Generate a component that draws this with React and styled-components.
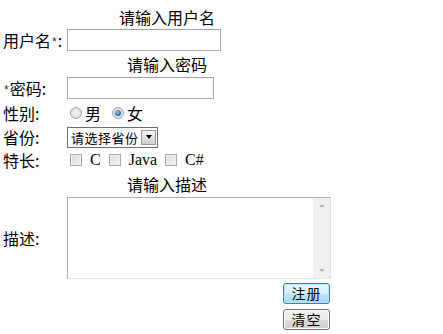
import React from "react";
import styled, { createGlobalStyle } from "styled-components";

const Global = createGlobalStyle`
  html, body { margin: 0; padding: 0; background: #fff; }
  body { font-family: "Noto Sans CJK SC", "Liberation Sans", sans-serif; color: #000; }
`;

const Form = styled.div`
  padding: 6px 0 0 3px;
  display: grid;
  grid-template-columns: 64px auto;
  align-items: center;
  font-size: 16px;
`;

const Label = styled.div`
  height: ${(p) => p.h}px;
  display: flex;
  align-items: center;
  line-height: 1;
  white-space: nowrap;
`;

const Star = styled.span`
  font-family: "Liberation Sans", sans-serif;
  font-size: 12px;
  color: #333;
  margin: 0 1px;
  transform: translateY(2px);
`;

const Cell = styled.div`
  height: ${(p) => p.h}px;
  display: flex;
  align-items: center;
`;

const Hint = styled.div`
  grid-column: 2;
  width: 200px;
  height: ${(p) => p.h}px;
  display: flex;
  align-items: center;
  justify-content: center;
  line-height: 1;
  font-size: 16px;
`;

const TextInput = styled.input`
  box-sizing: border-box;
  width: ${(p) => p.w}px;
  height: 22px;
  margin: 0;
  padding: 1px 2px;
  border: 1px solid #abadb3;
  border-top-color: #9ea3ab;
  font: inherit;
  outline: none;
`;

const Radio = styled.span`
  box-sizing: border-box;
  width: 12px;
  height: 12px;
  border-radius: 50%;
  border: 1px solid #a6a6a6;
  background: radial-gradient(circle at 50% 50%, #f2f2f2 0%, #d6d6d6 100%);
  display: inline-flex;
  align-items: center;
  justify-content: center;
  margin: 0 3px 0 3px;
  &::after {
    content: "";
    width: 6px;
    height: 6px;
    border-radius: 50%;
    background: radial-gradient(circle at 40% 35%, #8fd0f5 0%, #2a6fa6 60%, #174f7c 100%);
    display: ${(p) => (p.checked ? "block" : "none")};
  }
`;

const Choice = styled.span`
  display: inline-flex;
  align-items: center;
  margin-right: ${(p) => p.mr || 0}px;
  line-height: 1;
`;

const Select = styled.div`
  box-sizing: border-box;
  width: 91px;
  height: 21px;
  border: 1px solid #6f6f6f;
  display: flex;
  align-items: center;
  font-size: 13px;
  padding-left: 3px;
  line-height: 1;
  letter-spacing: 0.5px;
`;

const SelectText = styled.span`
  flex: 1;
`;

const Arrow = styled.span`
  box-sizing: border-box;
  width: 15px;
  height: 15px;
  margin-right: 1px;
  border: 1px solid #9a9a9a;
  background: linear-gradient(#f4f4f4, #cfcfcf);
  display: flex;
  align-items: center;
  justify-content: center;
  &::after {
    content: "";
    border-left: 3.5px solid transparent;
    border-right: 3.5px solid transparent;
    border-top: 4px solid #000;
  }
`;

const Check = styled.span`
  box-sizing: border-box;
  width: 12px;
  height: 12px;
  border: 1px solid #a9a9a9;
  background: linear-gradient(135deg, #d8d8d8, #f4f4f4);
  box-shadow: inset 0 0 0 1px #eee;
  margin: 0 8px 0 3px;
`;

const Latin = styled.span`
  font-family: "Liberation Serif", serif;
  font-size: 16px;
  margin-right: 5px;
`;

const TextArea = styled.div`
  box-sizing: border-box;
  width: 264px;
  height: 82px;
  border: 1px solid #abadb3;
  border-right-color: #dbdfe6;
  border-bottom-color: #e3e9ef;
  display: flex;
  justify-content: flex-end;
`;

const Scroll = styled.div`
  width: 17px;
  background: #f0f0f0;
  display: flex;
  flex-direction: column;
  justify-content: space-between;
  align-items: center;
  padding: 6px 0;
  box-sizing: border-box;
`;

const Tri = styled.span`
  border-left: 3px solid transparent;
  border-right: 3px solid transparent;
  ${(p) => (p.up ? "border-bottom: 3px solid #b8b8b8;" : "border-top: 3px solid #b8b8b8;")}
`;

const ButtonRow = styled.div`
  grid-column: 2;
  height: ${(p) => p.h}px;
  width: 263px;
  display: flex;
  justify-content: flex-end;
  align-items: center;
`;

const Button = styled.button`
  box-sizing: border-box;
  width: 47px;
  height: 21px;
  margin: 0;
  padding: 0;
  border-radius: 3px;
  border: 1px solid ${(p) => (p.focus ? "#3c7fb1" : "#707070")};
  background: ${(p) =>
    p.focus
      ? "linear-gradient(#eaf6fd 0%, #d9f0fc 50%, #bee6fd 51%, #a7d9f5 100%)"
      : "linear-gradient(#f2f2f2 0%, #ebebeb 50%, #dddddd 51%, #cfcfcf 100%)"};
  box-shadow: inset 0 0 0 1px ${(p) => (p.focus ? "#b9e3fa" : "#fcfcfc")};
  font-family: "Noto Sans CJK SC", sans-serif;
  font-size: 14px;
  line-height: 1;
  letter-spacing: 1px;
  color: #000;
`;

export default function App() {
  return (
    <>
      <Global />
      <Form>
        <Hint h={22}>请输入用户名</Hint>
        <Label h={24}>
          用户名<Star>*</Star>:
        </Label>
        <Cell h={24}>
          <TextInput w={154} />
        </Cell>
        <Hint h={24}>请输入密码</Hint>
        <Label h={24}>
          <Star>*</Star>密码:
        </Label>
        <Cell h={24}>
          <TextInput w={147} />
        </Cell>
        <Label h={26}>性别:</Label>
        <Cell h={26}>
          <Choice mr={8}>
            <Radio />男
          </Choice>
          <Choice>
            <Radio checked />女
          </Choice>
        </Cell>
        <Label h={22}>省份:</Label>
        <Cell h={22}>
          <Select>
            <SelectText>请选择省份</SelectText>
            <Arrow />
          </Select>
        </Cell>
        <Label h={23}>特长:</Label>
        <Cell h={23}>
          <Check />
          <Latin>C</Latin>
          <Check />
          <Latin>Java</Latin>
          <Check />
          <Latin>C#</Latin>
        </Cell>
        <Hint h={25}>请输入描述</Hint>
        <Label h={84}>描述:</Label>
        <Cell h={84}>
          <TextArea>
            <Scroll>
              <Tri up />
              <Tri />
            </Scroll>
          </TextArea>
        </Cell>
        <ButtonRow h={26}>
          <Button focus>注册</Button>
        </ButtonRow>
        <ButtonRow h={26}>
          <Button>清空</Button>
        </ButtonRow>
      </Form>
    </>
  );
}
